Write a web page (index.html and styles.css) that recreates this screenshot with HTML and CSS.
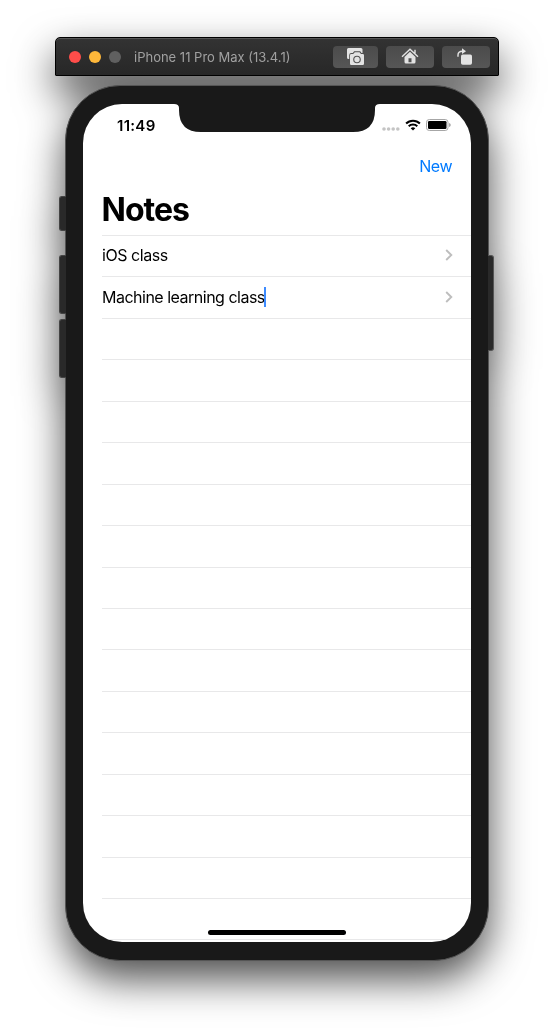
FILE: index.html
```
<!DOCTYPE html>
<html lang="en">
<head>
<meta charset="utf-8">
<title>iPhone 11 Pro Max (13.4.1)</title>
<link rel="stylesheet" href="styles.css">
</head>
<body>
<main class="simulator">
  <header class="toolbar">
    <div class="lights"><i class="light red"></i><i class="light amber"></i><i class="light gray"></i></div>
    <span class="device-name">iPhone 11 Pro Max (13.4.1)</span>
    <div class="tools">
      <button class="tool tool-shot" aria-label="Screenshot">
        <svg width="18" height="18" viewBox="0 0 18 18"><path d="M1.500 0h12.500a1.500 1.500 0 0 1 1.500 1.500V5h-1L13.200 3.200H7.200L5.800 5H4.300Q2.200 5 2.200 7.200V11H1.500A1.500 1.500 0 0 1 0 9.500V1.500A1.500 1.500 0 0 1 1.500 0z"/><path fill-rule="evenodd" d="M7.800 4.300h4.700l1.500 1.800h1.800A1.200 1.200 0 0 1 17 7.300v8.500a1.200 1.200 0 0 1-1.200 1.200H4.200A1.200 1.200 0 0 1 3 15.800V7.300a1.200 1.200 0 0 1 1.200-1.200h2zM10 7.700a3.800 3.800 0 1 0 0 7.600A3.800 3.800 0 0 0 10 7.700zm0 1.100a2.700 2.700 0 1 1 0 5.400 2.700 2.700 0 0 1 0-5.400z"/></svg>
      </button>
      <button class="tool" aria-label="Home">
        <svg width="18" height="17" viewBox="0 0 18 17"><path class="stroke" d="M1 8.800 9 1.300l8 7.500M14 1.800v3.500"/><path fill-rule="evenodd" d="M9 3.700 14.500 9v5a1.500 1.500 0 0 1-1.500 1.500H5A1.500 1.500 0 0 1 3.500 14V9zM7.500 10.300v3.900h3v-3.900z"/></svg>
      </button>
      <button class="tool" aria-label="Rotate">
        <svg width="18" height="18" viewBox="0 0 18 18"><rect x="4" y="6.500" width="11" height="10.300" rx="1.700"/><path class="stroke" d="M1 8.800V7q0-3.800 4.500-3.800"/><path d="M5 .2 9 3.200 5 6z"/></svg>
      </button>
    </div>
  </header>

  <section class="phone">
    <i class="side-key mute"></i><i class="side-key volume-up"></i><i class="side-key volume-down"></i><i class="side-key power"></i>
    <div class="screen">
      <svg class="notch" width="208" height="28" viewBox="0 0 208 28"><path d="M1 0h206q-5 0-5 4v2q0 22-22 22H28Q6 28 6 6V4Q6 0 1 0z"/></svg>
      <div class="status">
        <time>11:49</time>
        <div class="indicators">
          <svg class="cell" width="18" height="4" viewBox="0 0 18 4"><circle cx="2" cy="2" r="1.800"/><circle cx="6.600" cy="2" r="1.800"/><circle cx="11.200" cy="2" r="1.800"/><circle cx="15.800" cy="2" r="1.800"/></svg>
          <svg class="wifi" width="16" height="12" viewBox="0 0 16 12"><path d="M1.100 4.500a9.800 9.800 0 0 1 13.800 0M3.700 7.300a6.200 6.200 0 0 1 8.600 0"/><path class="dot" d="M5.700 9.200q2.300-1.800 4.600 0L8 11.600z"/></svg>
          <svg class="battery" width="25" height="12" viewBox="0 0 25 12"><rect class="shell" x=".5" y=".5" width="21.500" height="11" rx="2.800"/><rect x="2" y="2" width="18.500" height="8" rx="1.300"/><path class="tip" d="M23 4q1.800.7 1.800 2T23 8z"/></svg>
        </div>
      </div>
      <nav class="nav"><a class="new">New</a></nav>
      <h1 class="title">Notes</h1>
      <ul class="notes">
        <li class="note"><span class="label ios">iOS class</span><svg class="chevron" width="8" height="12" viewBox="0 0 8 12"><path d="M1.200 1 6.300 6l-5.100 5"/></svg></li>
        <li class="note"><span class="label">Machine learning class</span><i class="caret"></i><svg class="chevron" width="8" height="12" viewBox="0 0 8 12"><path d="M1.200 1 6.300 6l-5.100 5"/></svg></li>
        <li class="note"></li><li class="note"></li><li class="note"></li><li class="note"></li><li class="note"></li><li class="note"></li>
        <li class="note"></li><li class="note"></li><li class="note"></li><li class="note"></li><li class="note"></li>
        <li class="note"></li><li class="note"></li><li class="note"></li><li class="note"></li><li class="note"></li>
      </ul>
      <i class="home-bar"></i>
    </div>
  </section>
</main>
</body>
</html>
```
FILE: styles.css
```
* { box-sizing: border-box; }
body { margin: 0; background: #fff; overflow: hidden; height: 1035px; font-family: Inter, "Liberation Sans", sans-serif; }
.simulator {
  width: 444px; margin-left: 55px; padding-top: 37px;
  display: flex; flex-direction: column; gap: 9px;
  filter: drop-shadow(0 18px 20px rgba(0, 0, 0, .7));
}
.toolbar {
  height: 39px; display: flex; align-items: center; padding: 0 8px 0 13px;
  background: linear-gradient(#333, #272727); border: 1px solid #000; border-radius: 5px 5px 1px 1px;
  box-shadow: inset 0 1px #555;
}
.lights { display: flex; gap: 8px; }
.light { width: 12px; height: 12px; border-radius: 50%; }
.red { background: #ff4d4a; }
.amber { background: #ffb83a; }
.gray { background: #606060; }
.device-name { margin-left: 13px; font-size: 13px; color: #a0a0a0; white-space: nowrap; }
.tools { margin-left: auto; display: flex; gap: 8px; }
.tool {
  width: 48px; height: 22px; padding: 0; border: 0; border-radius: 4px;
  background: linear-gradient(#4b4b4b, #565656);
  display: flex; align-items: center; justify-content: center;
}
.tool-shot { width: 45px; }
.tool svg { fill: #e3e3e3; }
.tool .stroke { fill: none; stroke: #e3e3e3; stroke-width: 1.4; }

.phone {
  position: relative; width: 424px; height: 876px; margin-left: 10px; padding: 18px 17px 18px;
  background: #191919; border: 1px solid #555; border-radius: 55px;
}
.side-key { position: absolute; left: -7px; width: 7px; background: #292929; border: 1px solid #444; border-right: 0; border-radius: 3px 0 0 3px; }
.mute { top: 110px; height: 35px; }
.volume-up { top: 169px; height: 59px; }
.volume-down { top: 233px; height: 59px; }
.power { left: auto; right: -6px; top: 169px; width: 6px; height: 96px; border: 1px solid #555; border-left: 0; border-radius: 0 3px 3px 0; }
.screen {
  position: relative; width: 388px; height: 838px; overflow: hidden;
  background: #fff; border-radius: 39px;
}
.notch { position: absolute; left: 90px; top: 0; fill: #191919; }
.status { height: 42px; padding: 0 20px 0 34px; display: flex; align-items: center; justify-content: space-between; }
.status time { font-size: 15px; font-weight: 600; letter-spacing: .3px; }
.indicators { display: flex; align-items: center; gap: 5px; }
.cell { fill: #c4c4c4; margin-top: 7px; }
.wifi { fill: none; stroke: #000; stroke-width: 2; }
.wifi .dot { fill: #000; stroke: none; }
.shell { fill: none; stroke: #a6a6a6; }
.tip { fill: #a6a6a6; }
.nav { height: 41px; padding: 0 19px 2px 0; display: flex; justify-content: flex-end; align-items: center; }
.new { color: #007aff; font-size: 16px; letter-spacing: -.5px; }
.title { margin: 0; height: 48px; padding: 4px 0 0 18.5px; font-size: 32px; line-height: 38px; font-weight: 700; letter-spacing: -1px; }
.notes { list-style: none; margin: 0 0 0 19px; padding: 0; }
.note { height: 41.44px; border-top: 1px solid #e8e8e9; display: flex; align-items: center; padding: 0 18px 2px 0; font-size: 16px; letter-spacing: -.5px; }
.label { white-space: nowrap; }
.ios { letter-spacing: -.45px; }
.caret { width: 2px; height: 20px; margin-left: -1px; background: #3d8bff; }
.chevron { margin-left: auto; fill: none; stroke: #bebebe; stroke-width: 1.9; }
.home-bar { position: absolute; left: 125px; bottom: 7px; width: 138px; height: 5px; border-radius: 3px; background: #000; }
```
